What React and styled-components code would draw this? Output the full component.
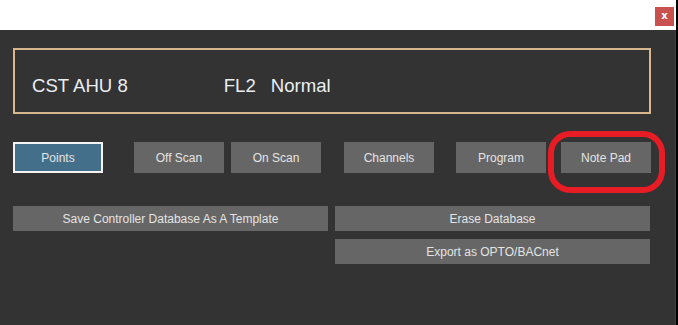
import React from "react";
import styled, { createGlobalStyle } from "styled-components";

const GlobalStyle = createGlobalStyle`
  html, body {
    margin: 0;
    padding: 0;
    background: #fff;
    font-family: "Liberation Sans", Arial, sans-serif;
  }
`;

const App = () => {
  const i18n = {
    name: "CST AHU 8",
    floor: "FL2",
    status: "Normal",
    saveTemplate: "Save Controller Database As A Template",
    erase: "Erase Database",
    exportOpto: "Export as OPTO/BACnet",
  };

  return (
    <Root>
      <GlobalStyle />
      <Window>
        <TitleBar>
          <CloseBtn>x</CloseBtn>
        </TitleBar>
        <Panel>
          <InfoBox>
            <InfoText>{i18n.name}</InfoText>
            <InfoText $offset={96}>{i18n.floor}</InfoText>
            <InfoText $offset={15}>{i18n.status}</InfoText>
          </InfoBox>
          <BtnRow>
            <Btn $active>Points</Btn>
            <Btn $offset={31}>Off Scan</Btn>
            <Btn $offset={7}>On Scan</Btn>
            <Btn $offset={23}>Channels</Btn>
            <Btn $offset={22}>Program</Btn>
            <Highlighted $offset={15}>
              <Btn>Note Pad</Btn>
              <Ring />
            </Highlighted>
          </BtnRow>
          <ActionGrid>
            <WideBtn>{i18n.saveTemplate}</WideBtn>
            <ActionCol>
              <WideBtn>{i18n.erase}</WideBtn>
              <WideBtn>{i18n.exportOpto}</WideBtn>
            </ActionCol>
          </ActionGrid>
        </Panel>
      </Window>
    </Root>
  );
};

const Root = styled.div`
  display: flex;
  width: 678px;
  height: 325px;
  overflow: hidden;
`;

const Window = styled.div`
  display: flex;
  flex-direction: column;
  width: 676px;
  border-right: 2px solid #000;
`;

const TitleBar = styled.div`
  display: flex;
  justify-content: flex-end;
  align-items: flex-start;
  height: 30px;
  padding: 7px 2px 0 0;
  box-sizing: border-box;
  background-color: #fff;
`;

const CloseBtn = styled.div`
  display: flex;
  justify-content: center;
  align-items: center;
  width: 19px;
  height: 19px;
  background-color: #c85150;
  color: #fff;
  font-family: "DejaVu Sans", sans-serif;
  font-weight: bold;
  font-size: 10px;
  line-height: 1;
  padding-bottom: 2px;
  box-sizing: border-box;
`;

const Panel = styled.div`
  flex: 1;
  display: flex;
  flex-direction: column;
  padding: 18px 0 0 13px;
  background-color: #333333;
  border-right: 1px solid #3d3d3d;
`;

const InfoBox = styled.div`
  display: flex;
  align-items: center;
  width: 638px;
  height: 66px;
  box-sizing: border-box;
  border: 2px solid #d8b78e;
  padding: 10px 0 0 17px;
`;

const InfoText = styled.span`
  margin-left: ${(p) => p.$offset || 0}px;
  color: #e9eef3;
  font-size: 18.6px;
`;

const BtnRow = styled.div`
  display: flex;
  margin-top: 28px;
  height: 31px;
`;

const Btn = styled.div`
  display: flex;
  justify-content: center;
  align-items: center;
  width: 90px;
  height: 31px;
  margin-left: ${(p) => p.$offset || 0}px;
  box-sizing: border-box;
  background-color: ${(p) => (p.$active ? "#436f8a" : "#666666")};
  border: ${(p) => (p.$active ? "2px solid #f4f4f4" : "none")};
  color: #e4e4e4;
  font-size: 12px;
`;

const Highlighted = styled.div`
  position: relative;
  margin-left: ${(p) => p.$offset || 0}px;
`;

const Ring = styled.div`
  position: absolute;
  left: -13px;
  right: -14px;
  top: -11px;
  bottom: -20px;
  border: 6px solid #e81c25;
  border-radius: 22px;
  pointer-events: none;
`;

const ActionGrid = styled.div`
  display: grid;
  grid-template-columns: 315px 315px;
  column-gap: 7px;
  align-items: start;
  margin-top: 33px;
`;

const ActionCol = styled.div`
  display: flex;
  flex-direction: column;
  gap: 8px;
`;

const WideBtn = styled.div`
  display: flex;
  justify-content: center;
  align-items: center;
  height: 25px;
  background-color: #666666;
  color: #e4e4e4;
  font-size: 12px;
`;

export default App;
